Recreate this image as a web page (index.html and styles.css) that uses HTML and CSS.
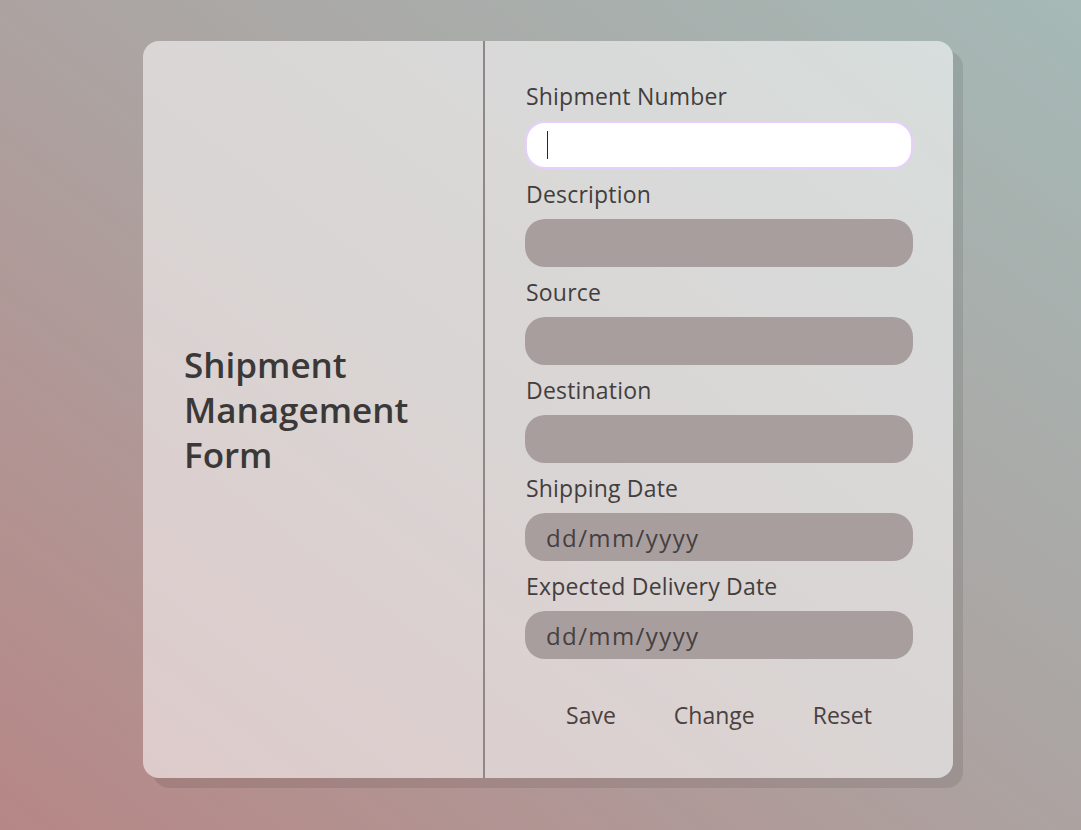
FILE: index.html
```html
<!DOCTYPE html>
<html lang="en">
<head>
<meta charset="utf-8">
<title>Shipment Management Form</title>
<link rel="stylesheet" href="styles.css">
</head>
<body>
  <main class="card">
    <section class="side">
      <h1 class="title">Shipment Management Form</h1>
    </section>
    <form class="form">
      <label class="field">
        <span class="label">Shipment Number</span>
        <span class="input-wrap">
          <input class="input input-active" type="text">
          <span class="caret"></span>
        </span>
      </label>
      <label class="field">
        <span class="label">Description</span>
        <input class="input" type="text">
      </label>
      <label class="field">
        <span class="label">Source</span>
        <input class="input" type="text">
      </label>
      <label class="field">
        <span class="label">Destination</span>
        <input class="input" type="text">
      </label>
      <label class="field">
        <span class="label">Shipping Date</span>
        <input class="input" type="text" placeholder="dd/mm/yyyy">
      </label>
      <label class="field">
        <span class="label">Expected Delivery Date</span>
        <input class="input" type="text" placeholder="dd/mm/yyyy">
      </label>
      <div class="actions">
        <button class="btn" type="button">Save</button>
        <button class="btn" type="button">Change</button>
        <button class="btn" type="button">Reset</button>
      </div>
    </form>
  </main>
</body>
</html>
```
FILE: styles.css
```css
html, body {
  margin: 0;
  padding: 0;
}
body {
  width: 1081px;
  height: 830px;
  overflow: hidden;
  background: linear-gradient(to top right, #b68786 0%, #aca3a1 50%, #a5b9b6 100%);
  font-family: "Open Sans", "Noto Sans", sans-serif;
  color: #3d3a3a;
  padding: 41px 0 0 143px;
  box-sizing: border-box;
}
.card {
  width: 810px;
  height: 737px;
  display: flex;
  border-radius: 16px;
  background: rgba(255, 255, 255, 0.55);
  box-shadow: 10px 10px 0 rgba(0, 0, 0, 0.09);
  box-sizing: border-box;
}
.side {
  width: 342px;
  display: flex;
  align-items: center;
  padding-left: 41px;
  box-sizing: border-box;
  border-right: 2px solid #8e8888;
}
.title {
  margin: 0;
  font-size: 35px;
  font-weight: 600;
  line-height: 45px;
  color: #3b3838;
  width: 260px;
}
.form {
  flex: 1;
  padding: 42px 40px 0 40px;
  display: flex;
  flex-direction: column;
}
.field {
  display: flex;
  flex-direction: column;
  margin-bottom: 12px;
}
.label {
  font-size: 23px;
  line-height: 26px;
  height: 26px;
  margin-bottom: 12px;
  padding-left: 1px;
  letter-spacing: 0.2px;
  color: #433e3e;
}
.input-wrap {
  position: relative;
  display: block;
  width: 388px;
  height: 48px;
}
.caret {
  position: absolute;
  left: 22px;
  top: 10px;
  width: 1px;
  height: 28px;
  background: #2a2626;
}
.input {
  width: 388px;
  height: 48px;
  box-sizing: border-box;
  border: none;
  border-radius: 20px;
  background: #a99e9e;
  padding: 0 21px;
  font-family: inherit;
  font-size: 24px;
  letter-spacing: 1.4px;
  color: #3d3a3a;
  outline: none;
  display: block;
}
.input::placeholder {
  color: #463f3f;
  opacity: 1;
}
.input-active {
  background: #ffffff;
  border: 2px solid #e6cffa;
  padding-left: 20px;
}
.actions {
  display: flex;
  justify-content: center;
  margin-top: 23px;
}
.btn {
  background: transparent;
  border: none;
  font-family: inherit;
  font-size: 23px;
  line-height: 28px;
  color: #4a4141;
  padding: 7px 29px;
  cursor: pointer;
}
```
